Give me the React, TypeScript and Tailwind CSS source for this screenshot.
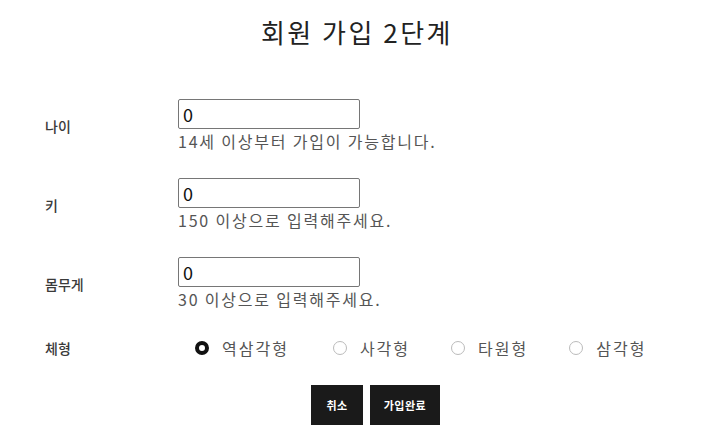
import React from "react"

type Field = {
  label: string
  hint: string
}

const fields: Field[] = [
  { label: "나이", hint: "14세 이상부터 가입이 가능합니다." },
  { label: "키", hint: "150 이상으로 입력해주세요." },
  { label: "몸무게", hint: "30 이상으로 입력해주세요." },
]

const shapes = ["역삼각형", "사각형", "타원형", "삼각형"]

export default function App() {
  return (
    <div className="w-[714px] h-[442px] bg-white font-['Noto_Sans_CJK_KR',sans-serif] text-[#222]">
      <h1 className="pt-[13px] text-center text-[26px] leading-[38px] font-normal tracking-[2.5px]">회원 가입 2단계</h1>

      <div className="mt-[48px] flex flex-col gap-[25px] pl-[45px]">
        {fields.map((f, i) => (
          <div className="grid grid-cols-[133px_auto] items-center" key={i}>
            <div className="text-[14px] text-[#3a3a3a] font-medium">{f.label}</div>
            <div className="flex flex-col">
              <input
                defaultValue="0"
                className="w-[182px] h-[30px] border border-[#767676] rounded-[2px] px-[4px] text-[18px] text-[#111] outline-none"
              />
              <div className="text-[16px] leading-[24px] text-[#555] tracking-[1.8px]">{f.hint}</div>
            </div>
          </div>
        ))}

        <div className="grid grid-cols-[133px_auto] items-center h-[24px]">
          <div className="text-[14px] text-[#3a3a3a] font-medium">체형</div>
          <div className="flex items-center gap-[41px] pl-[17px]">
            {shapes.map((s, i) => (
              <label className={i === 0 ? "flex items-center gap-[13px] mr-[3px]" : "flex items-center gap-[13px]"} key={i}>
                {i === 0 ? (
                  <span className="w-[14px] h-[14px] rounded-full border-[4px] border-[#111] bg-white" />
                ) : (
                  <span className="w-[14px] h-[14px] rounded-full border border-[#bbb] bg-white" />
                )}
                <span className="text-[16px] text-[#555] tracking-[2px]">{s}</span>
              </label>
            ))}
          </div>
        </div>
      </div>

      <div className="mt-[25px] flex gap-[7px] pl-[311px]">
        <button className="w-[52px] h-[40px] bg-[#1a1a1a] text-white text-[11px] font-bold tracking-[0.5px]">취소</button>
        <button className="w-[70px] h-[40px] bg-[#1a1a1a] text-white text-[11px] font-bold tracking-[0.5px]">가입완료</button>
      </div>
    </div>
  )
}
